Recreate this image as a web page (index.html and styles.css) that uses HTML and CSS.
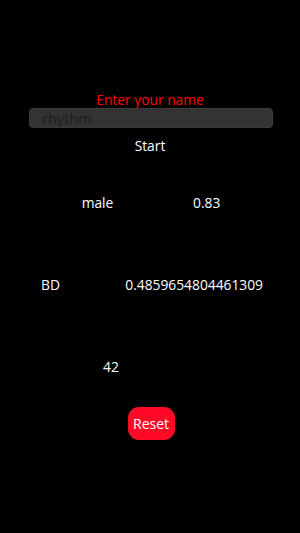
FILE: index.html
```html
<!DOCTYPE html>
<html lang="en">
<head>
  <meta charset="UTF-8">
  <title>Guess</title>
  <link rel="stylesheet" href="styles.css">
</head>
<body>

  <div class="app">
    <div class="title">Enter your name</div>
    <input class="name-input" type="text" placeholder="rhythm">
    <div class="start">Start</div>

    <div class="row row-gender">
      <span>male</span>
      <span>0.83</span>
    </div>

    <div class="row row-country">
      <span>BD</span>
      <span>0.4859654804461309</span>
    </div>

    <div class="row row-age">
      <span>42</span>
    </div>

    <div class="reset-wrap">
      <button class="reset">Reset</button>
    </div>
  </div>

</body>
</html>
```

FILE: styles.css
```css
html, body {
  margin: 0;
  padding: 0;
  background-color: #000000;
}

body {
  color: #ffffff;
  font-family: 'Open Sans', 'Noto Sans', sans-serif;
  font-size: 13.8px;
  width: 300px;
  height: 533px;
  overflow: hidden;
}

.app {
  display: flex;
  flex-direction: column;
  padding-top: 90px;
}

.title {
  color: #ff0000;
  text-align: center;
  font-size: 13.8px;
  line-height: 19px;
}

.name-input {
  box-sizing: border-box;
  margin: -1px 27px 0 29px;
  height: 20px;
  border: 1px solid #3a3a3a;
  border-radius: 4px;
  background-color: #333333;
  padding: 0 0 0 12px;
  font-family: 'Open Sans', 'Noto Sans', sans-serif;
  font-size: 14.5px;
  color: #1c1c1c;
  outline: none;
}

.name-input::placeholder {
  color: #1c1c1c;
}

.start {
  text-align: center;
  margin-top: 8px;
  line-height: 20px;
}

.row {
  display: flex;
  line-height: 20px;
}

.row-gender {
  margin-top: 37px;
  justify-content: space-evenly;
  padding-left: 2px;
}

.row-country {
  margin-top: 62px;
  justify-content: space-between;
  padding: 0 37px 0 41px;
}

.row-age {
  margin-top: 62px;
  padding-left: 103px;
}

.reset-wrap {
  display: flex;
  justify-content: center;
  margin-top: 30px;
  padding-left: 2px;
}

.reset {
  background-color: #ff0a26;
  color: #ffffff;
  border: none;
  border-radius: 11px;
  width: 47px;
  height: 33px;
  padding: 0;
  font-family: 'Open Sans', 'Noto Sans', sans-serif;
  font-size: 14px;
}
```
